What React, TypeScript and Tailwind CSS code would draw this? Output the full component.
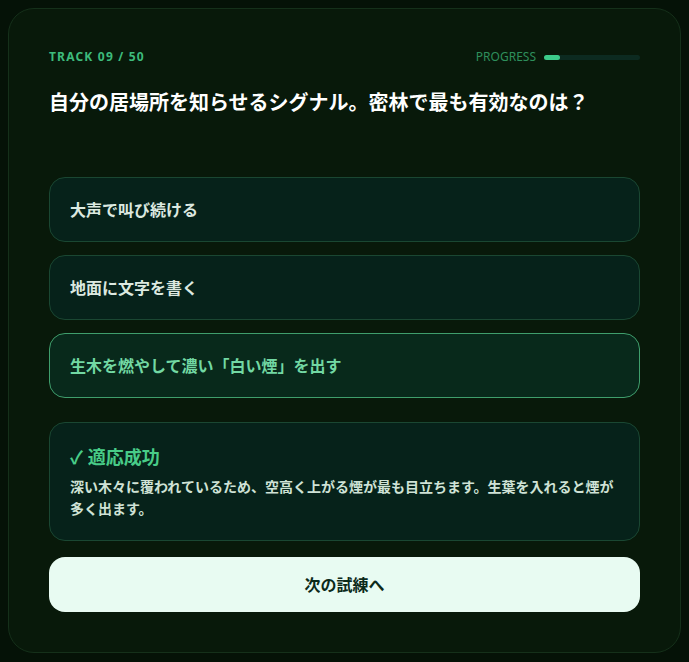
import React from 'react';

const options = [
  { label: '大声で叫び続ける', state: 'idle' },
  { label: '地面に文字を書く', state: 'idle' },
  { label: '生木を燃やして濃い「白い煙」を出す', state: 'correct' },
];

export default function App() {
  return (
    <div
      className="min-h-[662px] bg-[#051207] p-2"
      style={{ fontFamily: '"Noto Sans", "Noto Sans CJK JP", sans-serif' }}
    >
      <div className="rounded-[26px] border border-[#15301a] bg-[#08190a] p-10">
        <div className="flex items-center justify-between h-4">
          <span className="text-[12px] font-bold tracking-[0.1em] text-[#3dbb7c]">TRACK 09 / 50</span>
          <div className="flex items-center gap-2">
            <span className="text-[12px] text-[#2e8f5c]">PROGRESS</span>
            <div className="h-[5px] w-24 rounded-full bg-[#0c2a20]">
              <div className="h-full w-4 rounded-full bg-[#3ccb8a]" />
            </div>
          </div>
        </div>

        <h1 className="mt-6 text-[20px] leading-7 font-bold text-white">
          自分の居場所を知らせるシグナル。密林で最も有効なのは？
        </h1>

        <div className="mt-[60px] flex flex-col gap-[13px]">
          {options.map((o) => (
            <button
              key={o.label}
              className={
                o.state === 'correct'
                  ? 'h-[65px] rounded-2xl border border-[#3f9e6c] bg-[#08291b] px-5 text-left text-[16px] font-bold text-[#72d8a3]'
                  : 'h-[65px] rounded-2xl border border-[#1a4732] bg-[#06221a] px-5 text-left text-[16px] font-bold text-[#dce9e0]'
              }
            >
              {o.label}
            </button>
          ))}
        </div>

        <div className="mt-6 rounded-2xl border border-[#1a4732] bg-[#06221a] pl-5 pr-6 pt-[22px] pb-5">
          <div className="text-[18px] leading-6 font-bold text-[#48cc88]">✓ 適応成功</div>
          <p className="mt-[7px] text-[14px] leading-[22px] font-bold text-[#cfe2d6]">
            深い木々に覆われているため、空高く上がる煙が最も目立ちます。生葉を入れると煙が多く出ます。
          </p>
        </div>

        <button className="mt-4 h-[55px] w-full rounded-2xl bg-[#e8fbf2] text-[16px] font-bold text-[#0c2a1a]">
          次の試練へ
        </button>
      </div>
    </div>
  );
}
